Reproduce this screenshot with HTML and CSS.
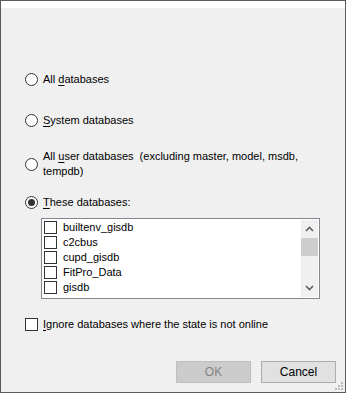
FILE: index.html
```html
<!DOCTYPE html>
<html lang="en">

<head>
    <meta charset="UTF-8">
    <title>Select Databases</title>
    <link rel="stylesheet" href="styles.css">
</head>

<body>
    <div class="dialog">
        <div class="title-strip"></div>

        <div class="content">
            <!-- Database choice -->
            <div class="option opt-all">
                <span class="radio"></span>
                <span class="label">All <u>d</u>atabases</span>
            </div>

            <div class="option opt-system">
                <span class="radio"></span>
                <span class="label"><u>S</u>ystem databases</span>
            </div>

            <div class="option opt-user">
                <span class="radio"></span>
                <span class="label">All <u>u</u>ser databases &nbsp;(excluding master, model, msdb,<br>tempdb)</span>
            </div>

            <div class="option opt-these">
                <span class="radio checked"></span>
                <span class="label"><u>T</u>hese databases:</span>
            </div>

            <div class="listbox">
                <ul class="db-list">
                    <li><span class="check"></span>builtenv_gisdb</li>
                    <li><span class="check"></span>c2cbus</li>
                    <li><span class="check"></span>cupd_gisdb</li>
                    <li><span class="check"></span>FitPro_Data</li>
                    <li><span class="check"></span>gisdb</li>
                </ul>
                <div class="scrollbar">
                    <svg class="arrow" width="9" height="6" viewBox="0 0 9 6"><path d="M1 5 L4.5 1.5 L8 5" fill="none" stroke="#606060" stroke-width="1.6"/></svg>
                    <div class="track"><div class="thumb"></div></div>
                    <svg class="arrow" width="9" height="6" viewBox="0 0 9 6"><path d="M1 1 L4.5 4.5 L8 1" fill="none" stroke="#606060" stroke-width="1.6"/></svg>
                </div>
            </div>

            <div class="option opt-ignore">
                <span class="check"></span>
                <span class="label"><u>I</u>gnore databases where the state is not online</span>
            </div>
        </div>

        <div class="buttons">
            <button class="btn" disabled>OK</button>
            <button class="btn">Cancel</button>
        </div>

        <svg class="grip" width="8" height="8" viewBox="0 0 8 8">
            <rect x="6" y="0" width="2" height="2" fill="#bcbcbc"/>
            <rect x="3" y="3" width="2" height="2" fill="#bcbcbc"/>
            <rect x="6" y="3" width="2" height="2" fill="#bcbcbc"/>
            <rect x="0" y="6" width="2" height="2" fill="#bcbcbc"/>
            <rect x="3" y="6" width="2" height="2" fill="#bcbcbc"/>
            <rect x="6" y="6" width="2" height="2" fill="#bcbcbc"/>
        </svg>
    </div>
</body>

</html>
```

FILE: styles.css
```css
/* Windows forms style dialog */
body {
    margin: 0;
    font-family: 'Liberation Sans', Arial, sans-serif;
    font-size: 11px;
    color: #000;
}

.dialog {
    position: relative;
    width: 346px;
    height: 393px;
    box-sizing: border-box;
    border: 1px solid #5a5a5a;
    background-color: #f0f0f0;
    display: flex;
    flex-direction: column;
}

.title-strip {
    height: 7px;
    background-color: #fff;
}

.content {
    flex: 1;
    padding: 0 0 0 24px;
}

.option {
    display: flex;
    align-items: center;
    gap: 5px;
    line-height: 15px;
}

.opt-all {
    margin-top: 64px;
}

.opt-system {
    margin-top: 26px;
}

.opt-user {
    margin-top: 21px;
}

.opt-these {
    margin-top: 16px;
}

.opt-ignore {
    margin-top: 18px;
}

.label u {
    text-decoration-thickness: 1px;
    text-underline-offset: 2px;
}

.radio {
    width: 13px;
    height: 13px;
    box-sizing: border-box;
    border: 1px solid #333;
    border-radius: 50%;
    background-color: #fff;
    display: flex;
    align-items: center;
    justify-content: center;
    flex-shrink: 0;
}

.radio.checked::after {
    content: '';
    width: 7px;
    height: 7px;
    border-radius: 50%;
    background-color: #333;
}

.check {
    width: 13px;
    height: 13px;
    box-sizing: border-box;
    border: 1px solid #333;
    background-color: #fff;
    flex-shrink: 0;
}

/* Checked list box */
.listbox {
    margin: 8px 0 0 16px;
    width: 279px;
    height: 81px;
    box-sizing: border-box;
    border: 1px solid #828790;
    background-color: #fff;
    display: flex;
    padding: 1px;
}

.db-list {
    list-style: none;
    margin: 0;
    padding: 0;
    flex: 1;
}

.db-list li {
    display: flex;
    align-items: center;
    gap: 6px;
    height: 15px;
    line-height: 15px;
}

.db-list .check {
    margin-left: 1px;
}

.scrollbar {
    width: 17px;
    background-color: #f0f0f0;
    display: flex;
    flex-direction: column;
    align-items: center;
}

.arrow {
    margin: 6px 0;
}

.track {
    flex: 1;
    width: 100%;
}

.thumb {
    height: 18px;
    background-color: #cdcdcd;
}

/* Bottom buttons */
.buttons {
    display: flex;
    justify-content: flex-end;
    gap: 10px;
    padding: 0 9px 9px 0;
}

.btn {
    width: 75px;
    height: 22px;
    font-family: inherit;
    font-size: 12px;
    background-color: #e1e1e1;
    border: 1px solid #adadad;
    color: #000;
    padding: 0;
}

.btn:disabled {
    background-color: #cccccc;
    border-color: #bfbfbf;
    color: #838383;
}

.grip {
    position: absolute;
    right: 2px;
    bottom: 2px;
}
```
